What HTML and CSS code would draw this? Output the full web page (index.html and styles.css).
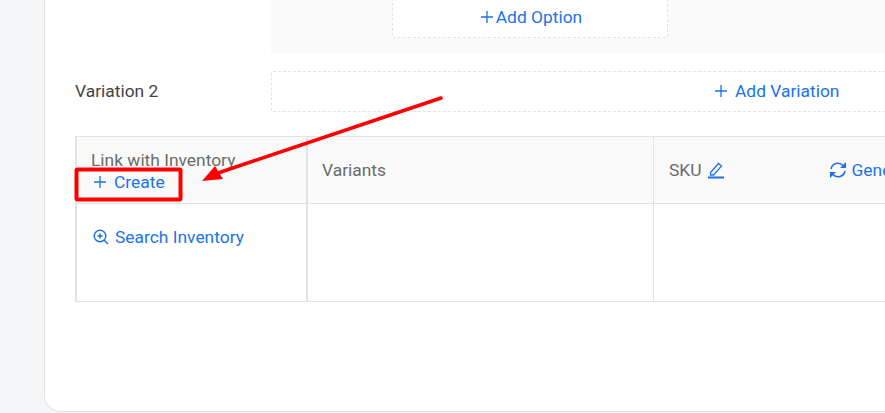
FILE: index.html
```html
<!DOCTYPE html>
<html>
<head>
<meta charset="utf-8">
<title>Variations</title>
<link rel="stylesheet" href="styles.css">
</head>
<body>
<div class="card">
  <div class="option-panel">
    <div class="add-option"><a class="link tight"><svg class="plus" viewBox="0 0 14 14"><path d="M7 1v12M1 7h12"/></svg>Add Option</a></div>
  </div>
  <div class="variation-row">
    <div class="variation-label">Variation 2</div>
    <div class="add-variation"><a class="link"><svg class="plus" viewBox="0 0 14 14"><path d="M7 1v12M1 7h12"/></svg>Add Variation</a></div>
  </div>
  <div class="inventory-table">
    <div class="head first">
      <div class="head-title">Link with Inventory</div>
      <a class="link create"><svg class="plus" viewBox="0 0 14 14"><path d="M7 1v12M1 7h12"/></svg>Create</a>
    </div>
    <div class="head">Variants</div>
    <div class="head sku">
      <span>SKU</span>
      <svg class="edit" viewBox="0 0 16 18"><path d="M2.500 11.500 10.500 2.500l3 2.600-8 8.900H2.500z"/><path d="M0 16.500h16"/></svg>
      <a class="link generate"><svg class="sync" viewBox="0 0 18 18"><path d="M2 8A7 7 0 0 1 14 4.500M16 10A7 7 0 0 1 4 13.500"/><path class="fill" d="M17 1v6h-6zM1 17v-6h6z"/></svg>Generate</a>
    </div>
    <div class="cell"><a class="link search"><svg class="zoom" viewBox="0 0 16 16"><circle cx="7" cy="7" r="5.800"/><path d="M11.200 11.200 15 15M7 4.300v5.400M4.300 7h5.400"/></svg>Search Inventory</a></div>
    <div class="cell"></div>
    <div class="cell"></div>
  </div>
</div>
<svg class="marks" viewBox="0 0 885 413">
  <rect x="76.500" y="169.500" width="104" height="30" rx="1"/>
  <path d="M441 98 218 173"/>
  <polygon points="202,181 215,166 223,179"/>
</svg>
</body>
</html>
```
FILE: styles.css
```css
html, body {
  margin: 0;
  height: 100%;
  overflow: hidden;
}

body {
  position: relative;
  background: #f4f6f8;
  font: 17.4px/20px Roboto, "Liberation Sans", sans-serif;
  color: #6b6b6b;
}

a { color: #1a73e8; }

svg { display: block; flex: none; }

.card {
  box-sizing: border-box;
  width: 900px;
  height: 412px;
  margin-left: 44px;
  padding-left: 30px;
  background: #fff;
  border: 1px solid #e3e3e3;
  border-top: 0;
  border-radius: 0 0 16px 16px;
}

.option-panel {
  height: 53px;
  margin-left: 196px;
  padding-left: 121px;
  background: #fafafa;
}

.add-option {
  box-sizing: border-box;
  width: 276px;
  height: 38px;
  padding: 7px 0 0 2px;
  display: flex;
  justify-content: center;
  align-items: flex-start;
  background: #fff;
  border: 1px dashed #e3e3e3;
  border-top: 0;
  border-radius: 0 0 2px 2px;
}

.link {
  display: flex;
  align-items: center;
}

.plus, .edit, .sync, .zoom {
  fill: none;
  stroke: #1a73e8;
}

.plus {
  width: 14px;
  height: 14px;
  stroke-width: 1.3;
}

.tight .plus { margin-right: 2px; }

.variation-row {
  display: flex;
  align-items: center;
  margin-top: 18px;
}

.variation-label {
  width: 196px;
  padding-bottom: 2px;
  color: #444;
}

.add-variation {
  box-sizing: border-box;
  flex: 1;
  height: 41px;
  display: flex;
  align-items: center;
  padding: 0 0 1px 442px;
  border: 1px dashed #e3e3e3;
  border-radius: 2px;
}

.add-variation .plus { margin-right: 7px; }

.inventory-table {
  display: grid;
  grid-template-columns: 231px 346px 1fr;
  grid-template-rows: 67px 98px;
  margin-top: 24px;
  border-top: 1px solid #e3e3e3;
  border-left: 2px solid #e3e3e3;
}

.head, .cell {
  box-sizing: border-box;
  border-bottom: 1px solid #e3e3e3;
  border-right: 1px solid #e3e3e3;
}

.head {
  display: flex;
  align-items: center;
  padding-left: 14px;
  background: #fafafa;
}

.head:nth-child(3), .cell:last-child { border-right: 0; }

.head.first, .cell:nth-child(4) { border-right-width: 2px; }

.head.first {
  display: block;
  padding-top: 13px;
}

.create { margin-top: 2px; margin-left: 2px; }

.create .plus { margin-right: 7px; }

.sku { padding-left: 15px; }

.edit {
  width: 16px;
  height: 18px;
  margin-left: 6px;
  stroke-width: 1.3;
}

.edit path:last-child { stroke-width: 2; }

.generate { margin-left: 105px; }

.sync {
  width: 18px;
  height: 18px;
  margin-right: 5px;
  stroke-width: 1.6;
}

.sync .fill { fill: #1a73e8; stroke: none; }

.cell { padding: 23px 0 0 16px; }

.zoom {
  width: 16px;
  height: 16px;
  margin-right: 6px;
  stroke-width: 1.4;
}

.marks {
  position: absolute;
  left: 0;
  top: 0;
  width: 885px;
  height: 413px;
}

.marks rect, .marks path {
  fill: none;
  stroke: #f00;
}

.marks rect { stroke-width: 4; }

.marks path {
  stroke-width: 3.5;
  stroke-linecap: round;
}

.marks polygon { fill: #f00; }
```
